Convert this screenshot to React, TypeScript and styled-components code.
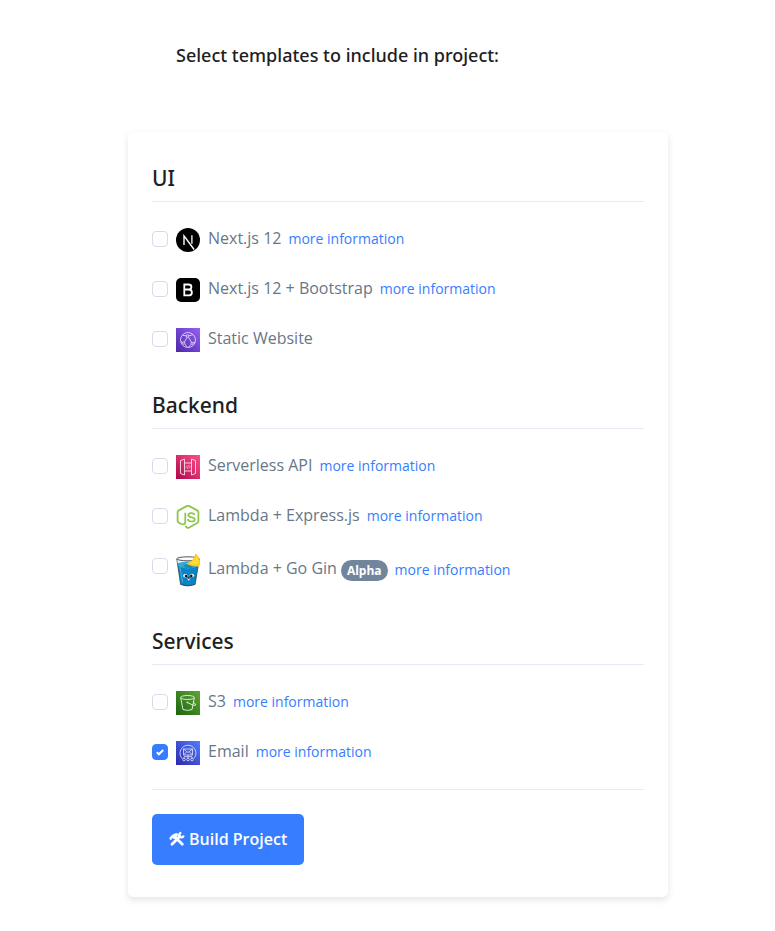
import React, { useState } from 'react';
import styled, { createGlobalStyle } from 'styled-components';

const GlobalStyle = createGlobalStyle`
  *, *::before, *::after { box-sizing: border-box; }
  body {
    margin: 0;
    background: #fff;
    color: #677788;
    font-family: 'Open Sans', sans-serif;
    font-size: 16px;
    line-height: 24px;
  }
`;

const Page = styled.main`
  padding: 41px 107px 34px 128px;
`;

const PageTitle = styled.h1`
  margin: 0 0 63px;
  padding-left: 48px;
  color: #1e2022;
  font-family: 'Noto Sans', 'Open Sans', sans-serif;
  font-size: 18px;
  font-weight: 500;
  line-height: 28px;
`;

const Card = styled.form`
  padding: 32px 24px;
  border-radius: 5px;
  background: #fff;
  box-shadow: 0 3px 6px rgba(140, 152, 164, 0.25);
`;

const Section = styled.section`
  margin-bottom: 39px;
  &:last-of-type { margin-bottom: 24px; }
`;

const SectionTitle = styled.h2`
  margin: 0 0 26px;
  padding-bottom: 9px;
  border-bottom: 1px solid #e7eaf3;
  color: #1e2022;
  font-family: 'Noto Sans', 'Open Sans', sans-serif;
  font-size: 21px;
  font-weight: 500;
  line-height: 28px;
`;

const Rows = styled.div`
  display: grid;
  gap: 26px;
`;

const Row = styled.div<{ $tall?: boolean }>`
  display: flex;
  align-items: ${(p) => (p.$tall ? 'center' : 'flex-start')};
  height: ${(p) => (p.$tall ? '30px' : '24px')};
  margin-bottom: ${(p) => (p.$tall ? '3px' : '0')};
`;

const Check = styled.input`
  appearance: none;
  flex: none;
  align-self: flex-start;
  width: 16px;
  height: 16px;
  margin: 3px 8px 0 0;
  border: 1px solid #d5dbed;
  border-radius: 4px;
  background: #fff center / 16px 16px no-repeat;
  &:checked {
    border-color: #377dff;
    background-color: #377dff;
    background-origin: border-box;
    background-image: url("data:image/svg+xml,%3Csvg xmlns='http://www.w3.org/2000/svg' viewBox='0 0 16 16'%3E%3Cpath d='M4.8 8.2l2.1 2.1 4.3-4.3' fill='none' stroke='%23fff' stroke-width='2'/%3E%3C/svg%3E");
  }
`;

const ItemLabel = styled.label`
  display: flex;
  align-items: center;
  gap: 8px;
  svg { flex: none; display: block; }
`;

const Name = styled.span`
  line-height: 20px;
  padding-bottom: 4px;
`;

const Badge = styled.span`
  margin-left: 4px;
  padding: 0 6px;
  border-radius: 11px;
  background: #71869d;
  color: #fff;
  font-size: 12px;
  font-weight: 700;
  line-height: 21px;
`;

const More = styled.a`
  margin-left: 7px;
  color: #377dff;
  font-size: 14px;
  line-height: 22px;
  text-decoration: none;
`;

const Divider = styled.hr`
  margin: 0 0 24px;
  border: 0;
  border-top: 1px solid #e7eaf3;
`;

const BuildButton = styled.button`
  display: inline-flex;
  align-items: center;
  gap: 4px;
  height: 51px;
  padding: 0 17px 1px;
  border: 0;
  border-radius: 5px;
  background: #377dff;
  color: #fff;
  font: 600 16px/24px 'Open Sans', sans-serif;
`;

const NextIcon = () => (
  <svg width="24" height="24" viewBox="0 0 24 24" aria-hidden="true">
    <circle cx="12" cy="12" r="12" fill="#000" />
    <path d="M8 17V7.8L18.1 21.5" fill="none" stroke="#fff" strokeWidth="1.4" />
    <path d="M15.9 7.2v8.6" stroke="#fff" strokeWidth="1.3" />
  </svg>
);

const BootstrapIcon = () => (
  <svg width="24" height="24" viewBox="0 0 24 24" aria-hidden="true">
    <rect width="24" height="24" rx="5" fill="#000" />
    <path
      d="M8.3 6.500h4.200c1.800 0 2.900.9 2.900 2.400 0 1.600-1.200 2.600-3 2.600H8.300h4.400c2.100 0 3.200 1.100 3.200 2.900 0 1.900-1.200 3-3.300 3H8.300z"
      fill="none"
      stroke="#fff"
      strokeWidth="1.8"
    />
  </svg>
);

const StaticIcon = () => (
  <svg width="24" height="24" viewBox="0 0 24 24" aria-hidden="true">
    <defs>
      <linearGradient id="purple" x1="0" y1="1" x2="1" y2="0">
        <stop stopColor="#4d27a8" />
        <stop offset="1" stopColor="#9560f5" />
      </linearGradient>
    </defs>
    <path fill="url(#purple)" d="M0 0h24v24H0z" />
    <g fill="none" stroke="#fff" strokeWidth=".8" opacity=".85">
      <circle cx="12" cy="12" r="7.5" />
      <circle cx="11.500" cy="8" r="1.300" />
      <circle cx="7.800" cy="15" r="1.200" />
      <circle cx="16" cy="15.300" r="1.100" />
      <path d="M11 9.200l-2.500 4.800M12.500 9l3 5.300M6.500 7.200l3.700.6M12.800 7.700L16.800 6.800M5 13.500l1.800.8M9 16l2 3M15 16.300l-2.500 3M17 15l2.200-1" />
    </g>
  </svg>
);

const ApiIcon = () => (
  <svg width="24" height="24" viewBox="0 0 24 24" aria-hidden="true">
    <defs>
      <linearGradient id="pink" x1="0" y1="1" x2="1" y2="0">
        <stop stopColor="#b0084d" />
        <stop offset="1" stopColor="#ff4f8b" />
      </linearGradient>
    </defs>
    <path fill="url(#pink)" d="M0 0h24v24H0z" />
    <g fill="none" stroke="#fff" strokeWidth=".9" opacity=".85">
      <path d="M8.500 4L4.500 5.500v13l4 1.500zM15.500 4l4 1.500v13l-4 1.500zM8.500 8h7M8.500 16h7" />
      <path d="M10.800 10.500L9.700 12l1.100 1.500M13.200 10.500l1.100 1.500-1.100 1.500M12.500 10.200l-1 3.600" strokeWidth=".6" />
    </g>
  </svg>
);

const NodeIcon = () => (
  <svg width="24" height="24" viewBox="0 0 24 24" fill="none" stroke="#8cc84b" aria-hidden="true">
    <path
      d="M9.200 20.800l2 1.900q.8.500 1.600 0l8.800-5q.8-.5.8-1.400V6.900q0-.8-.8-1.300L12.800.900q-.8-.4-1.600 0l-8.800 4.700q-.8.500-.8 1.300V16q0 .9.800 1.400l2.300 1.300c3.200 1.500 4.600.2 4.600-1.900V7.800"
      strokeWidth="1.800"
    />
    <path
      d="M18.400 10c-.2-1.300-1.200-1.800-3.100-1.800-2 0-3 .7-3 1.900 0 3.500 6.500.9 6.500 4.300 0 1.400-1.200 2.100-3.300 2.100-2.300 0-3.500-.8-3.600-2.500"
      strokeWidth="1.700"
    />
  </svg>
);

const GinIcon = () => (
  <svg width="24" height="34" viewBox="0 0 24 34" aria-hidden="true">
    <path d="M.8 6L4.600 31.500q7 3 14.500 0L23.300 6q-11 3-22.500 0z" fill="#0a83c8" stroke="#27313b" strokeWidth=".7" />
    <path d="M1 6l.9 5q10 3 20.300 0l.9-5z" fill="#edf5f8" />
    <path d="M2 10q9.500-3 19.900 0l-.6 3.500q-9 4-18.600 0z" fill="#35a8d7" />
    <ellipse cx="12" cy="5.800" rx="11.200" ry="2" fill="#f9fbfb" stroke="#27313b" strokeWidth=".8" />
    <path d="M7 13.500q3-3.500 8-3.500l4 1-3 4q-6 .5-9-1.500z" fill="#168ead" />
    <path d="M10 10.800Q18 8.500 19.500.3L22 3q4 6.500 1 10.500-7 .5-13-2.700z" fill="#ffc918" />
    <path d="M12.500 10q6.500-1.800 8-7 3.500 4.700 1.500 8.500-5 .5-9.500-1.500z" fill="#ffdc3c" />
    <path d="M3.500 12l3 17" stroke="#45b3e5" strokeWidth="1" />
    <ellipse cx="9.300" cy="22.700" rx="2.200" ry="1.700" fill="#fff" />
    <ellipse cx="15.900" cy="22.500" rx="2.200" ry="1.700" fill="#fff" />
    <circle cx="10" cy="23" r="1.300" fill="#15191c" />
    <circle cx="15.300" cy="22.900" r="1.300" fill="#15191c" />
    <ellipse cx="12.700" cy="25.700" rx="1.700" ry=".9" fill="#dec09d" />
    <path d="M12.100 26.300h1.200v1.200h-1.200z" fill="#fff" />
    <ellipse cx="12.700" cy="25" rx="1" ry=".7" fill="#241f20" />
  </svg>
);

const BucketIcon = () => (
  <svg width="24" height="24" viewBox="0 0 24 24" aria-hidden="true">
    <defs>
      <linearGradient id="green" x1="0" y1="1" x2="1" y2="0">
        <stop stopColor="#1b660f" />
        <stop offset="1" stopColor="#60a535" />
      </linearGradient>
    </defs>
    <path fill="url(#green)" d="M0 0h24v24H0z" />
    <g fill="none" stroke="#fff" strokeWidth=".9" opacity=".9">
      <ellipse cx="11.500" cy="6.500" rx="6.800" ry="2" />
      <path d="M4.700 6.500l2.200 12q4.600 1.800 9.200 0l2.200-12M11.500 11.500q7.500 4 8.200 2.500.5-1-2.200-2.500" />
      <circle cx="11.300" cy="11.400" r=".5" />
    </g>
  </svg>
);

const EmailIcon = () => (
  <svg width="24" height="24" viewBox="0 0 24 24" aria-hidden="true">
    <defs>
      <linearGradient id="blue" x1="0" y1="1" x2="1" y2="0">
        <stop stopColor="#2e27ad" />
        <stop offset="1" stopColor="#527fff" />
      </linearGradient>
    </defs>
    <path fill="url(#blue)" d="M0 0h24v24H0z" />
    <g fill="none" stroke="#fff" strokeWidth=".8" opacity=".85">
      <path d="M6 17.500a8 8 0 1 1 12 0" />
      <path d="M7.500 8h9v6h-9zl4.500 3.500L16.500 8M7.500 14l3.200-3.200M16.500 14l-3.200-3.200M12 14v3M8 17.200v-1.500h8v1.500" />
      <circle cx="8" cy="18.500" r="1.300" />
      <circle cx="12" cy="18.500" r="1.300" />
      <circle cx="16" cy="18.500" r="1.300" />
    </g>
  </svg>
);

const ToolsIcon = () => (
  <svg width="16" height="16" viewBox="0 0 16 16" fill="none" stroke="#fff" aria-hidden="true">
    <path d="M6 6l7.300 7.300" strokeWidth="2.800" strokeLinecap="round" />
    <path d="M.7 7.800Q1.500 3.800 8 2.300L8.800 4 7 6.500 5 7.700 3.300 6.500 2 8.800z" fill="#fff" strokeWidth=".8" />
    <path d="M3 13.200l8-8" strokeWidth="2.800" strokeLinecap="round" />
    <path d="M12.300 1.800a2.300 2.300 0 1 0 2.400 2.800" strokeWidth="2.200" />
  </svg>
);

type Item = {
  id: string;
  name: string;
  icon: () => React.ReactElement;
  more?: boolean;
  badge?: string;
};

const sections: { title: string; items: Item[] }[] = [
  {
    title: 'UI',
    items: [
      { id: 'next', name: 'Next.js 12', icon: NextIcon, more: true },
      { id: 'next-bootstrap', name: 'Next.js 12 + Bootstrap', icon: BootstrapIcon, more: true },
      { id: 'static', name: 'Static Website', icon: StaticIcon },
    ],
  },
  {
    title: 'Backend',
    items: [
      { id: 'api', name: 'Serverless API', icon: ApiIcon, more: true },
      { id: 'express', name: 'Lambda + Express.js', icon: NodeIcon, more: true },
      { id: 'gin', name: 'Lambda + Go Gin', icon: GinIcon, more: true, badge: 'Alpha' },
    ],
  },
  {
    title: 'Services',
    items: [
      { id: 's3', name: 'S3', icon: BucketIcon, more: true },
      { id: 'email', name: 'Email', icon: EmailIcon, more: true },
    ],
  },
];

export default function App() {
  const [selected, setSelected] = useState<string[]>(['email']);
  const toggle = (id: string) =>
    setSelected((s) => (s.includes(id) ? s.filter((x) => x !== id) : [...s, id]));

  return (
    <>
      <GlobalStyle />
      <Page>
        <PageTitle>Select templates to include in project:</PageTitle>
        <Card onSubmit={(e) => e.preventDefault()}>
          {sections.map((section) => (
            <Section key={section.title}>
              <SectionTitle>{section.title}</SectionTitle>
              <Rows>
                {section.items.map(({ id, name, icon: Icon, more, badge }) => (
                  <Row key={id} $tall={!!badge}>
                    <Check
                      type="checkbox"
                      id={id}
                      checked={selected.includes(id)}
                      onChange={() => toggle(id)}
                    />
                    <ItemLabel htmlFor={id}>
                      <Icon />
                      <Name>{name}</Name>
                    </ItemLabel>
                    {badge && <Badge>{badge}</Badge>}
                    {more && <More href={`#${id}`}>more information</More>}
                  </Row>
                ))}
              </Rows>
            </Section>
          ))}
          <Divider />
          <BuildButton type="submit">
            <ToolsIcon />
            Build Project
          </BuildButton>
        </Card>
      </Page>
    </>
  );
}
